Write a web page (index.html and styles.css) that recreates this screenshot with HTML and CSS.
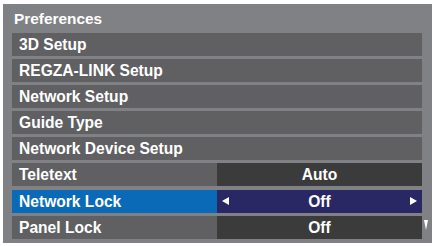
FILE: index.html
```html
<!DOCTYPE html>
<html lang="en">
<head>
  <meta charset="UTF-8">
  <title>Preferences</title>
  <link rel="stylesheet" href="styles.css">
</head>
<body>
  <div class="menu-panel">
    <div class="menu-title">Preferences</div>
    <ul class="menu-list">
      <li class="menu-row"><span class="row-label">3D Setup</span></li>
      <li class="menu-row"><span class="row-label">REGZA-LINK Setup</span></li>
      <li class="menu-row"><span class="row-label">Network Setup</span></li>
      <li class="menu-row"><span class="row-label">Guide Type</span></li>
      <li class="menu-row"><span class="row-label">Network Device Setup</span></li>
      <li class="menu-row has-value">
        <span class="row-label">Teletext</span>
        <span class="row-value">Auto</span>
      </li>
      <li class="menu-row has-value selected">
        <span class="row-label">Network Lock</span>
        <span class="row-value">
          <span class="arrow arrow-left"></span>
          Off
          <span class="arrow arrow-right"></span>
        </span>
      </li>
      <li class="menu-row has-value">
        <span class="row-label">Panel Lock</span>
        <span class="row-value">Off</span>
      </li>
    </ul>
    <span class="scroll-down"></span>
  </div>
</body>
</html>
```

FILE: styles.css
```css
body {
  margin: 0;
  background: #fff;
  font-family: 'Liberation Sans', Arial, sans-serif;
  font-weight: bold;
  color: #fff;
}
.menu-panel {
  position: relative;
  margin: 4px 3px 3px 3px;
  height: 239px;
  background: #808184;
  padding: 0 10px 0 9px;
  box-sizing: border-box;
}
.menu-title {
  height: 29px;
  line-height: 29px;
  font-size: 15.4px;
  padding-left: 2px;
}
.menu-list {
  list-style: none;
  margin: 0;
  padding: 0;
  display: flex;
  flex-direction: column;
  gap: 3.1px;
}
.menu-row {
  display: flex;
  height: 23px;
  background: #606062;
  font-size: 15.6px;
  line-height: 23px;
}
.row-label {
  padding-left: 7px;
}
.has-value .row-label {
  width: 205px;
  flex: none;
  box-sizing: border-box;
}
.row-value {
  position: relative;
  flex: 1;
  background: #3b3b3b;
  text-align: center;
}
.selected .row-label {
  background: #0b6ab8;
}
.selected .row-value {
  background: #2a2864;
}
.arrow {
  position: absolute;
  top: 7px;
  width: 0;
  height: 0;
  border-top: 4.5px solid transparent;
  border-bottom: 4.5px solid transparent;
}
.arrow-left {
  left: 5px;
  border-right: 7px solid #fff;
}
.arrow-right {
  right: 5px;
  border-left: 7px solid #fff;
}
.scroll-down {
  position: absolute;
  right: 4px;
  top: 216px;
  width: 0;
  height: 0;
  border-left: 2.5px solid transparent;
  border-right: 2.5px solid transparent;
  border-top: 10px solid #fff;
}
```
